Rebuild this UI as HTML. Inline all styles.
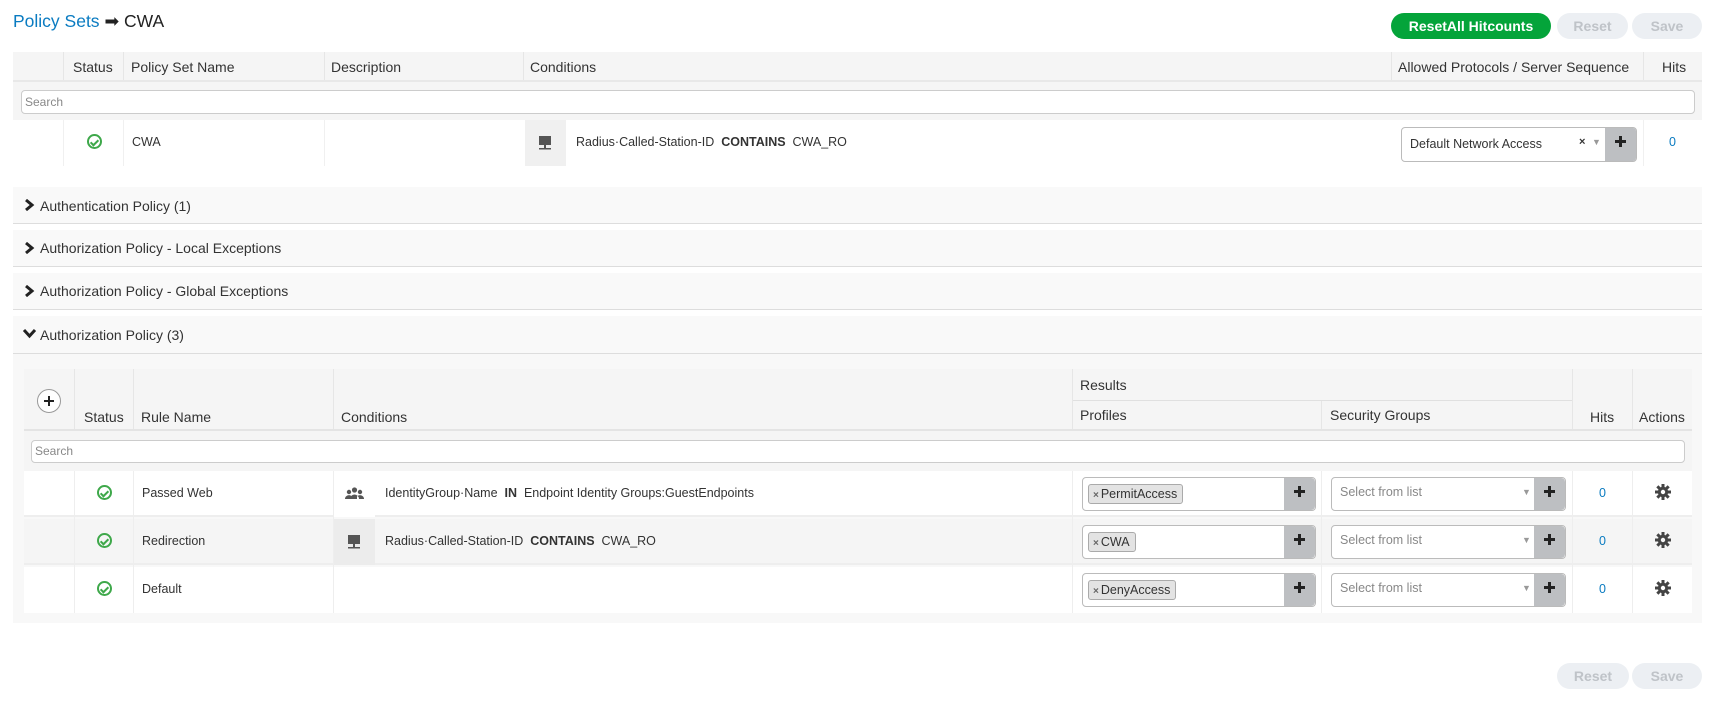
<!DOCTYPE html>
<html><head><meta charset="utf-8"><style>
*{box-sizing:border-box;margin:0;padding:0}
body{width:1712px;height:722px;background:#fff;font-family:"Liberation Sans",Arial,sans-serif;color:#333;position:relative;overflow:hidden}
.a{position:absolute}
.btn{position:absolute;border-radius:14px;font-weight:bold;font-size:14px;text-align:center;line-height:26px}
.g{background:#04a43a;color:#fff}
.d{background:#eceff3;color:#bfc3c8}
.hdr{background:#f5f5f5;font-size:14px;color:#333}
.vl{position:absolute;top:0;bottom:0;width:1px;background:#e6e6e6}
.t{position:absolute;font-size:12.5px;color:#333;white-space:nowrap}
.h{position:absolute;font-size:14px;color:#333;white-space:nowrap}
.search{position:absolute;background:#fff;border:1px solid #ccc;border-radius:4px;font-size:12px;color:#888;padding-left:3px}
.sec{position:absolute;left:13px;width:1689px;background:#f9f9f9;border-bottom:1px solid #ddd;font-size:14px;color:#333}
.sec svg{position:absolute;left:10px;top:12px}
.ok{position:absolute;width:15px;height:15px;border:2px solid #3ea84a;border-radius:50%}
.ok:after{content:"";position:absolute;left:3px;top:1.5px;width:3px;height:6px;border:solid #3ea84a;border-width:0 2px 2px 0;transform:rotate(45deg)}
.sel{position:absolute;background:#fff;border:1px solid #bbb;border-radius:4px}
.pl{position:absolute;top:0;right:0;bottom:0;width:31px;background:#bdbfc2;border-radius:0 4px 4px 0}
.pl:before{content:"";position:absolute;left:10px;top:12px;width:11px;height:3px;background:#222}
.pl:after{content:"";position:absolute;left:14px;top:8px;width:3px;height:11px;background:#222}
.tag{position:absolute;left:5px;top:6px;height:20px;background:#e3e3e3;border:1px solid #aaa;border-radius:3px;font-size:12.5px;line-height:18px;padding:0 5px 0 4px;color:#333}
.tag b{font-size:10px;color:#666;margin-right:2px}
.blue{color:#0a7bc1}
.ic{position:absolute;background:#f0f0f0}
.gear{position:absolute}
</style></head><body>
<div class="a" style="left:13px;top:11px;font-size:17.5px"><span style="color:#0a7bc1">Policy Sets</span> <span style="color:#222">➡ CWA</span></div>
<div class="btn g" style="left:1391px;top:13px;width:160px">ResetAll Hitcounts</div>
<div class="btn d" style="left:1557px;top:13px;width:71px">Reset</div>
<div class="btn d" style="left:1632px;top:13px;width:70px">Save</div>

<div class="a hdr" style="left:13px;top:52px;width:1689px;height:30px;border-bottom:2px solid #e8e8e8">
 <div class="vl" style="left:50px"></div><div class="vl" style="left:110px"></div><div class="vl" style="left:311px"></div><div class="vl" style="left:510px"></div><div class="vl" style="left:1378px"></div><div class="vl" style="left:1630px"></div>
 <div class="h" style="left:60px;top:7px">Status</div>
 <div class="h" style="left:118px;top:7px">Policy Set Name</div>
 <div class="h" style="left:318px;top:7px">Description</div>
 <div class="h" style="left:517px;top:7px">Conditions</div>
 <div class="h" style="left:1385px;top:7px">Allowed Protocols / Server Sequence</div>
 <div class="h" style="left:1649px;top:7px">Hits</div>
</div>
<div class="a" style="left:13px;top:82px;width:1689px;height:38px;background:#f5f5f5"></div>
<div class="search" style="left:21px;top:90px;width:1674px;height:24px;line-height:22px">Search</div>
<div class="a" style="left:13px;top:120px;width:1689px;height:46px;background:#fff">
 <div class="vl" style="left:50px;background:#f0f0f0"></div><div class="vl" style="left:110px;background:#f0f0f0"></div><div class="vl" style="left:311px;background:#f0f0f0"></div><div class="vl" style="left:1630px;background:#f0f0f0"></div>
</div>
<div class="ok" style="left:87px;top:134px"></div>
<div class="t" style="left:132px;top:135px">CWA</div>
<div class="ic" style="left:525px;top:120px;width:41px;height:46px"><svg width="41" height="46"><rect x="14" y="16" width="12" height="9" fill="#555"/><rect x="19" y="25" width="2" height="3" fill="#555"/><rect x="14" y="28" width="12" height="1.5" fill="#555"/></svg></div>
<div class="t" style="left:576px;top:135px">Radius·Called-Station-ID&nbsp; <b>CONTAINS</b>&nbsp; CWA_RO</div>
<div class="sel" style="left:1401px;top:127px;width:236px;height:35px"><div class="t" style="left:8px;top:9px">Default Network Access</div><div class="t" style="left:177px;top:8px;font-weight:bold;font-size:11px">×</div><div class="t" style="left:190px;top:9px;color:#999;font-size:9px">▼</div><div class="pl" style="border-radius:0 3px 3px 0"></div></div>
<div class="t blue" style="left:1669px;top:135px">0</div>

<div class="sec" style="top:187px;height:37px"><svg width="12" height="12"><path d="M3 1l6 5-6 5" fill="none" stroke="#222" stroke-width="3"/></svg><span class="a" style="left:27px;top:11px">Authentication Policy (1)</span></div>
<div class="sec" style="top:230px;height:37px"><svg width="12" height="12"><path d="M3 1l6 5-6 5" fill="none" stroke="#222" stroke-width="3"/></svg><span class="a" style="left:27px;top:10px">Authorization Policy - Local Exceptions</span></div>
<div class="sec" style="top:273px;height:37px"><svg width="12" height="12"><path d="M3 1l6 5-6 5" fill="none" stroke="#222" stroke-width="3"/></svg><span class="a" style="left:27px;top:10px">Authorization Policy - Global Exceptions</span></div>
<div class="sec" style="top:316px;height:38px"><svg width="13" height="12" style="top:11px"><path d="M1 3l5.5 6 5.5-6" fill="none" stroke="#222" stroke-width="3"/></svg><span class="a" style="left:27px;top:11px">Authorization Policy (3)</span></div>

<div class="a" style="left:13px;top:354px;width:1689px;height:269px;background:#f8f8f8"></div>
<div class="a hdr" style="left:24px;top:369px;width:1668px;height:62px;border-bottom:2px solid #e4e4e4">
 <div class="vl" style="left:50px"></div><div class="vl" style="left:109px"></div><div class="vl" style="left:309px"></div><div class="vl" style="left:1048px"></div><div class="vl" style="left:1548px"></div><div class="vl" style="left:1608px"></div>
 <div class="a" style="left:1049px;top:31px;width:499px;height:1px;background:#e0e0e0"></div>
 <div class="vl" style="left:1297px;top:32px"></div>
 <div class="a" style="left:13px;top:20px;width:24px;height:24px;border:1px solid #999;border-radius:50%;background:#fff"><svg width="22" height="22"><path d="M11 6v10M6 11h10" stroke="#222" stroke-width="2"/></svg></div>
 <div class="h" style="left:60px;top:40px">Status</div>
 <div class="h" style="left:117px;top:40px">Rule Name</div>
 <div class="h" style="left:317px;top:40px">Conditions</div>
 <div class="h" style="left:1056px;top:8px">Results</div>
 <div class="h" style="left:1056px;top:38px">Profiles</div>
 <div class="h" style="left:1306px;top:38px">Security Groups</div>
 <div class="h" style="left:1566px;top:40px">Hits</div>
 <div class="h" style="left:1615px;top:40px">Actions</div>
</div>
<div class="a" style="left:24px;top:431px;width:1668px;height:40px;background:#f5f5f5"></div>
<div class="search" style="left:31px;top:440px;width:1654px;height:23px;line-height:21px">Search</div>

<div class="a" style="left:24px;top:471px;width:1668px;height:46px;background:#fff;border-bottom:2px solid #eee"></div>
<div class="a" style="left:24px;top:519px;width:1668px;height:46px;background:#f5f5f5;border-bottom:2px solid #eee"></div>
<div class="a" style="left:24px;top:567px;width:1668px;height:46px;background:#fff"></div>
<div class="a" style="left:24px;top:471px;width:1668px;height:142px">
 <div class="vl" style="left:50px;background:#eee"></div><div class="vl" style="left:109px;background:#eee"></div><div class="vl" style="left:309px;background:#eee"></div><div class="vl" style="left:1048px;background:#eee"></div><div class="vl" style="left:1297px;background:#eee"></div><div class="vl" style="left:1548px;background:#eee"></div><div class="vl" style="left:1608px;background:#eee"></div>
</div>

<div class="ok" style="left:97px;top:485px"></div>
<div class="t" style="left:142px;top:486px">Passed Web</div>
<div class="ic" style="left:334px;top:471px;width:41px;height:46px;background:#fff"><svg width="41" height="46"><circle cx="20.5" cy="19" r="2.6" fill="#555"/><circle cx="15" cy="21" r="2.2" fill="#555"/><circle cx="26" cy="21" r="2.2" fill="#555"/><path d="M16 28a4.5 4.5 0 0 1 9 0z M11 28a4 4 0 0 1 7-2.5v2.5z M30 28a4 4 0 0 0-7-2.5v2.5z" fill="#555"/></svg></div>
<div class="t" style="left:385px;top:486px">IdentityGroup·Name&nbsp; <b>IN</b>&nbsp; Endpoint Identity Groups:GuestEndpoints</div>

<div class="ok" style="left:97px;top:533px"></div>
<div class="t" style="left:142px;top:534px">Redirection</div>
<div class="ic" style="left:334px;top:519px;width:41px;height:46px;background:#ececec"><svg width="41" height="46"><rect x="14" y="16" width="12" height="9" fill="#555"/><rect x="19" y="25" width="2" height="3" fill="#555"/><rect x="14" y="28" width="12" height="1.5" fill="#555"/></svg></div>
<div class="t" style="left:385px;top:534px">Radius·Called-Station-ID&nbsp; <b>CONTAINS</b>&nbsp; CWA_RO</div>

<div class="ok" style="left:97px;top:581px"></div>
<div class="t" style="left:142px;top:582px">Default</div>

<div class="sel" style="left:1082px;top:477px;width:234px;height:34px"><div class="tag"><b>×</b>PermitAccess</div><div class="pl"></div></div>
<div class="sel" style="left:1082px;top:525px;width:234px;height:34px"><div class="tag"><b>×</b>CWA</div><div class="pl"></div></div>
<div class="sel" style="left:1082px;top:573px;width:234px;height:34px"><div class="tag"><b>×</b>DenyAccess</div><div class="pl"></div></div>

<div class="sel" style="left:1331px;top:477px;width:235px;height:34px"><div class="t" style="left:8px;top:7px;color:#888">Select from list</div><div class="t" style="left:190px;top:9px;color:#999;font-size:9px">▼</div><div class="pl"></div></div>
<div class="sel" style="left:1331px;top:525px;width:235px;height:34px"><div class="t" style="left:8px;top:7px;color:#888">Select from list</div><div class="t" style="left:190px;top:9px;color:#999;font-size:9px">▼</div><div class="pl"></div></div>
<div class="sel" style="left:1331px;top:573px;width:235px;height:34px"><div class="t" style="left:8px;top:7px;color:#888">Select from list</div><div class="t" style="left:190px;top:9px;color:#999;font-size:9px">▼</div><div class="pl"></div></div>

<div class="t blue" style="left:1599px;top:486px">0</div>
<div class="t blue" style="left:1599px;top:534px">0</div>
<div class="t blue" style="left:1599px;top:582px">0</div>
<svg class="gear" style="left:1655px;top:484px" width="16" height="16" viewBox="0 0 16 16"><g fill="#444"><circle cx="8" cy="8" r="5.2"/><g id="tt"><rect x="6.5" y="0" width="3" height="16"/><rect x="0" y="6.5" width="16" height="3"/></g><use href="#tt" transform="rotate(45 8 8)"/></g><circle cx="8" cy="8" r="2.2" fill="#fff"/></svg>
<svg class="gear" style="left:1655px;top:532px" width="16" height="16" viewBox="0 0 16 16"><g fill="#444"><circle cx="8" cy="8" r="5.2"/><rect x="6.5" y="0" width="3" height="16"/><rect x="0" y="6.5" width="16" height="3"/><g transform="rotate(45 8 8)"><rect x="6.5" y="0" width="3" height="16"/><rect x="0" y="6.5" width="16" height="3"/></g></g><circle cx="8" cy="8" r="2.2" fill="#f5f5f5"/></svg>
<svg class="gear" style="left:1655px;top:580px" width="16" height="16" viewBox="0 0 16 16"><g fill="#444"><circle cx="8" cy="8" r="5.2"/><rect x="6.5" y="0" width="3" height="16"/><rect x="0" y="6.5" width="16" height="3"/><g transform="rotate(45 8 8)"><rect x="6.5" y="0" width="3" height="16"/><rect x="0" y="6.5" width="16" height="3"/></g></g><circle cx="8" cy="8" r="2.2" fill="#fff"/></svg>

<div class="btn d" style="left:1557px;top:663px;width:72px">Reset</div>
<div class="btn d" style="left:1632px;top:663px;width:70px">Save</div>
</body></html>
